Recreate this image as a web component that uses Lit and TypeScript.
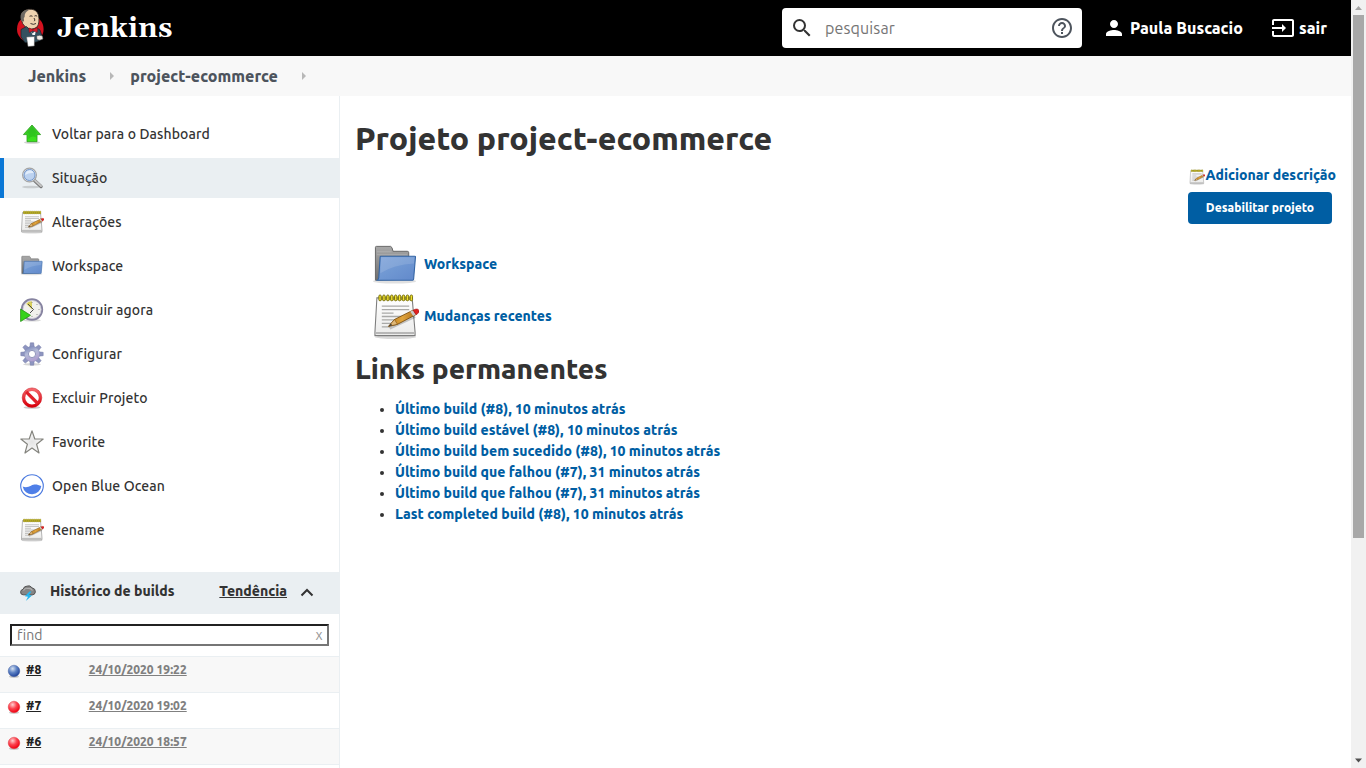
import { LitElement, html, css, svg } from "lit";
import { customElement } from "lit/decorators.js";

const notepad = (id: string) => svg`
  <defs>
    <linearGradient id="${id}p" x1="0" y1="0" x2="1" y2="0"><stop offset="0" stop-color="#b8791a"/><stop offset=".5" stop-color="#e0a43c"/><stop offset="1" stop-color="#b0701a"/></linearGradient>
    <linearGradient id="${id}b" x1="0" y1="0" x2="0" y2="1"><stop offset="0" stop-color="#ffffff"/><stop offset="1" stop-color="#ebebea"/></linearGradient>
  </defs>
  <ellipse cx="24" cy="45" rx="21" ry="2" fill="#000" opacity=".15"/>
  <path d="M5 5 H41 L44 40 V43.500 H3 V40 Z" fill="url(#${id}b)" stroke="#7d7d7d" stroke-width="1.100"/>
  <path d="M4 40.800 H43" stroke="#a5a5a5" stroke-width="1.500"/>
  <path d="M10 13.500H38 M10 17H38 M10 20.500H22 M10 24H35 M10 27.500H30 M10 31H20 M10 34.500H18" stroke="#a9a9a7" stroke-width="1.300"/>
  <path d="M7 5.500 H41" stroke="#a9a23c" stroke-width="4"/>
  ${[8, 12, 16, 20, 24, 28, 32, 36, 40].map((x) => svg`<rect x="${x - 1}" y="2" width="2.400" height="6" rx="1.200" fill="#f0e12a" stroke="#6f6810" stroke-width=".9"/>`)}
  <path d="M18 36 L44 24" stroke="#000" stroke-width="3" opacity=".2"/>
  <path d="M17 34 L23 27 L42 17.500 L45 22 L26 32 Z" fill="url(#${id}p)" stroke="#7a4c0c" stroke-width=".9"/>
  <path d="M17 34 L23 27 L26 32 Z" fill="#e0b878" stroke="#7a4c0c" stroke-width=".6"/>
  <path d="M17 34 L19.300 31.300 L20.600 33 Z" fill="#333"/>
  <path d="M39 19 L42 17.500 L45 22 L42 23.600 Z" fill="#c8c8c8"/>
  <path d="M42 17.500 Q47 15 48 18 Q48.500 20.500 45 22.300 Z" fill="#e02020" stroke="#a01010" stroke-width=".6"/>`;

const folder = (id: string) => svg`
  <defs>
    <linearGradient id="${id}f" x1="0" y1="0" x2="1" y2="1"><stop offset="0" stop-color="#7fa3d9"/><stop offset=".5" stop-color="#6f97d2"/><stop offset="1" stop-color="#6289cb"/></linearGradient>
    <linearGradient id="${id}g" x1="0" y1="0" x2="0" y2="1"><stop offset="0" stop-color="#a8a8a8"/><stop offset="1" stop-color="#6e6e6e"/></linearGradient>
  </defs>
  <ellipse cx="23" cy="42" rx="22" ry="2.500" fill="#000" opacity=".12"/>
  <path d="M3.500 41 V7.500 Q3.500 6.500 4.500 6.500 H19 Q20.500 6.500 21.500 11.500 H36 Q37.500 11.500 37.500 13 V40 Z" fill="url(#${id}g)" stroke="#666" stroke-width="1"/>
  <path d="M5 12 H20 M5 15 H36" stroke="#bdbdbd" stroke-width=".8" opacity=".7"/>
  <path d="M9 16.500 H43.500 Q44.500 16.500 44.400 17.500 L42.500 40 Q42.400 41 41.500 41 H5.500 Q6.700 40 6.900 38.500 L8.300 17.500 Q8.400 16.500 9 16.500 Z" fill="url(#${id}f)" stroke="#3465a4" stroke-width="1.100"/>
  <path d="M8.500 34 Q22 25 43 24 L43.400 17.500 H9.300 Z" fill="#fff" opacity=".13"/>`;

const gearTeeth = () =>
  [0, 45, 90, 135, 180, 225, 270, 315].map(
    (a) => svg`<path d="M9.800 5.500 L10.300 .800 H13.700 L14.200 5.500 Z" transform="rotate(${a} 12 12)"/>`
  );

const icons: Record<string, unknown> = {
  up: svg`<defs><linearGradient id="up" x1="0" y1="0" x2="0" y2="1"><stop offset="0" stop-color="#3fc92e"/><stop offset="1" stop-color="#3be41c"/></linearGradient></defs>
    <ellipse cx="12" cy="20.500" rx="8" ry="1.300" fill="#000" opacity=".18"/>
    <path d="M12 3 L20.600 12.600 H17 V19.700 H7 V12.600 H3.400 Z" fill="url(#up)" stroke="#2a9c1c" stroke-width=".8" stroke-linejoin="round"/>
    <path d="M12 4.600 L18 11.600 H15.800 V15.200 Q11 13.200 8.400 17.200 V11.600 H5.700 Z" fill="#0f9a10" opacity=".3"/>`,
  search: svg`<ellipse cx="11" cy="21" rx="9" ry="1.300" fill="#000" opacity=".14"/>
    <path d="M14.500 14.500 L21 20.500" stroke="#777" stroke-width="3.400" stroke-linecap="round"/>
    <path d="M15 14.500 L21 20" stroke="#c4c4c4" stroke-width="2" stroke-linecap="round"/>
    <circle cx="9.500" cy="9" r="6.900" fill="#dfe8f4" stroke="#a4a4a4" stroke-width="1.200"/>
    <circle cx="9.500" cy="9" r="5.500" fill="#bcd2f0" stroke="#6b90c6" stroke-width=".9"/>
    <path d="M5 9 Q6 4.500 10 4.200 Q13 4.300 13.500 7 Q9 6.500 5 9Z" fill="#e2edfb"/>`,
  clock: svg`<ellipse cx="12" cy="22.300" rx="9" ry="1.200" fill="#000" opacity=".15"/>
    <circle cx="12" cy="11.500" r="10.200" fill="#f1f1ec" stroke="#8683a0" stroke-width="1.900"/>
    <circle cx="12" cy="11.500" r="9" fill="none" stroke="#c9c7d6" stroke-width=".8"/>
    <path d="M12 11.500 L6.200 5.700 A8.200 8.200 0 0 1 12 3.300 Z" fill="#d9d05a"/>
    <path d="M8 6 L13.500 11.500 L10 15" fill="none" stroke="#4b4b4b" stroke-width="1"/>
    <g fill="#8b8b8b"><circle cx="12" cy="4.500" r=".6"/><circle cx="19" cy="11.500" r=".6"/><circle cx="17" cy="6.500" r=".6"/><circle cx="17" cy="16.500" r=".6"/><circle cx="12" cy="18.500" r=".6"/></g>
    <path d="M.600 11 L10.500 17.300 L.600 23.500 Z" fill="#35d21c" stroke="#239312" stroke-width=".8"/>`,
  gear: svg`<defs><linearGradient id="ge" x1="0" y1="0" x2=".4" y2="1"><stop offset="0" stop-color="#6b79b0"/><stop offset=".5" stop-color="#b4bbd8"/><stop offset="1" stop-color="#b0a0d0"/></linearGradient></defs>
    <ellipse cx="12" cy="22.300" rx="9" ry="1.300" fill="#000" opacity=".16"/>
    <g fill="#8e95c0" stroke="#737aa6" stroke-width=".5">${gearTeeth()}</g>
    <circle cx="12" cy="12" r="7.700" fill="url(#ge)" stroke="#868cb5" stroke-width=".4"/>
    <circle cx="12" cy="12" r="3.600" fill="#fff" stroke="#8a8fb5" stroke-width=".9"/>`,
  stop: svg`<defs><linearGradient id="st" x1="0" y1="0" x2="0" y2="1"><stop offset="0" stop-color="#f4656a"/><stop offset="1" stop-color="#d9000c"/></linearGradient></defs>
    <ellipse cx="12" cy="21.500" rx="8.500" ry="1.300" fill="#000" opacity=".2"/>
    <circle cx="12" cy="11.700" r="8.300" fill="#fff" stroke="url(#st)" stroke-width="3"/>
    <path d="M6.200 5.900 L17.800 17.500" stroke="#e0202a" stroke-width="3.200"/>
    <circle cx="12" cy="11.700" r="9.800" fill="none" stroke="#c90a14" stroke-width=".5"/>`,
  star: svg`<defs><radialGradient id="sr"><stop offset="0" stop-color="#e4e4e4"/><stop offset="1" stop-color="#fafafa"/></radialGradient></defs>
    <path d="M12 .900 L14.800 9 H23.200 L16.600 14.200 L19 23 L12 18 L5 23 L7.400 14.200 L.800 9 H9.200 Z" fill="url(#sr)" stroke="#84847e" stroke-width="1.200" stroke-linejoin="round"/>`,
  ocean: svg`<circle cx="12" cy="12" r="11.300" fill="#fff" stroke="#4a79df" stroke-width="1.100"/>
    <path d="M2.700 12.500 C6 14 8.500 12.800 11 11.700 C15 9.700 17.500 10.800 21.300 12 A9.400 9.400 0 0 1 2.700 12.500 Z" fill="#4f7fe8"/>`,
};

const glyph = (kind: string, id: string) =>
  kind === "notepad"
    ? html`<svg class="icon" viewBox="0 0 48 48">${notepad(id)}</svg>`
    : kind === "folder"
      ? html`<svg class="icon" viewBox="0 2 48 48">${folder(id)}</svg>`
      : html`<svg class="icon" viewBox="0 0 24 24">${icons[kind]}</svg>`;

const tasks: [string, string][] = [
  ["up", "Voltar para o Dashboard"],
  ["search", "Situação"],
  ["notepad", "Alterações"],
  ["folder", "Workspace"],
  ["clock", "Construir agora"],
  ["gear", "Configurar"],
  ["stop", "Excluir Projeto"],
  ["star", "Favorite"],
  ["ocean", "Open Blue Ocean"],
  ["notepad", "Rename"],
];

const permalinks = [
  "Último build (#8), 10 minutos atrás",
  "Último build estável (#8), 10 minutos atrás",
  "Último build bem sucedido (#8), 10 minutos atrás",
  "Último build que falhou (#7), 31 minutos atrás",
  "Último build que falhou (#7), 31 minutos atrás",
  "Last completed build (#8), 10 minutos atrás",
];

const builds: [string, string, string][] = [
  ["#8", "24/10/2020 19:22", "blue"],
  ["#7", "24/10/2020 19:02", "red"],
  ["#6", "24/10/2020 18:57", "red"],
];

@customElement("app-root")
export class AppRoot extends LitElement {
  static styles = css`
    :host { display: flex; width: 1366px; height: 768px; overflow: hidden; background: #fff; color: #333;
      font-family: Ubuntu, "Noto Sans", "Open Sans", sans-serif; font-size: 14px; white-space: nowrap; }
    * { box-sizing: border-box; }
    svg { display: block; flex: none; }
    .page { width: 1351px; display: flex; flex-direction: column; }
    .header { height: 56px; flex: none; background: #000; display: flex; align-items: center; color: #fff; font-size: 16px; }
    .butler { margin-left: 16px; }
    .brand { margin-left: 12px; width: 117px; font: bold 28px/32px Georgia, Gelasio, "DejaVu Serif", serif; letter-spacing: .35px; padding-top: 1px; }
    .search { margin-left: auto; width: 300px; height: 40px; border-radius: 4px; background: #fff; color: #757575; display: flex; align-items: center; padding: 0 8px; }
    .search span { margin-left: 11px; flex: 1; letter-spacing: .14px; }
    .user { display: flex; align-items: center; margin-left: 20px; width: 169px; font-weight: 800; }
    .user span { margin-left: 4px; }
    .logout { display: flex; align-items: center; width: 80px; font-weight: 800; }
    .logout span { margin-left: 4px; }
    .crumbs { height: 40px; flex: none; background: #f8f8f8; display: flex; align-items: center; padding-left: 28px; color: #4d545d; font-weight: 800; font-size: 16px; }
    .tri { width: 0; height: 0; border: 4px solid transparent; border-left-color: #b8b8b8; border-right: 0; }
    .crumbs .first { margin: 0 16px 0 24px; }
    .crumbs .last { margin-left: 24px; }
    .body { flex: 1; display: flex; min-height: 0; }
    .side { width: 340px; border-right: 1px solid #eaeff2; padding-top: 18px; overflow: hidden; }
    .task { height: 40px; margin-bottom: 4px; display: flex; align-items: center; gap: 8px; padding-left: 16px; border-left: 4px solid transparent; font-weight: 500; letter-spacing: .105px; }
    .task.on { background: #eaeff2; border-left-color: #0a77d6; }
    .icon { width: 24px; height: 24px; }
    .hist { height: 42px; margin-top: 22px; background: #eaeff2; display: flex; align-items: center; padding: 0 24px 4px 20px; font-weight: 800; }
    .hist .t { margin-left: 14px; flex: 1; }
    .hist svg.cloud { margin-top: 3px; }
    .hist svg.chev { margin: 4px 0 0 12px; }
    .find { margin: 10px; height: 22px; border: 2px inset #767676; display: flex; justify-content: space-between; align-items: center; padding: 0 4.500px 0 5px; color: #757575; line-height: 16px; letter-spacing: .02px; }
    .find .x { color: #999; }
    .build { height: 36px; border-top: 1px solid #eaeff2; display: flex; padding: 4px 0 0 7px; font-weight: 800; font-size: 12px; line-height: 18px; }
    .build:nth-child(odd) { background: #f8f8f8; }
    .build.rest { background: #fff; }
    .build svg { margin: 3px 5px 0 0; }
    .build .no { width: 62.700px; color: #222; }
    .build .date { color: #808080; letter-spacing: .03px; }
    .main { flex: 1; padding: 0 15px; }
    h1, h2 { margin: 0; font-weight: 800; }
    h1 { font-size: 32px; line-height: 40px; padding-top: 22px; }
    .tools { display: flex; flex-direction: column; align-items: flex-end; }
    .link { color: #005ea3; font-weight: 800; text-decoration: none; }
    .desc { display: flex; align-items: center; height: 20px; margin-top: 7px; }
    .desc svg { width: 16px; height: 16px; margin-top: 3px; }
    .btn { margin: 7px 4px 0 0; width: 144px; height: 32px; border-radius: 4px; background: #005ea3; color: #fff; font-weight: 800; font-size: 12px; display: flex; align-items: center; justify-content: center; padding-bottom: 1px; }
    .entry { display: flex; align-items: center; gap: 5px; height: 52px; padding-left: 17px; }
    .entry svg { width: 47px; height: 47px; }
    .entries { margin-top: 14px; }
    h2 { font-size: 28px; line-height: 36px; margin-top: 9px; }
    ul { margin: 12px 0 0; padding-left: 40px; line-height: 21px; }
    .scroll { width: 15px; background: #f1f1f1; display: flex; flex-direction: column; align-items: center; }
    .scroll i { width: 11px; height: 523px; background: #a8a8a8; margin-bottom: auto; }
    .scroll svg { height: 15px; }
  `;

  render() {
    return html`
      <div class="page">
        <div class="header">
          <svg class="butler" width="29" height="40" viewBox="0 0 29 40">
            <ellipse cx="14.300" cy="21" rx="13.300" ry="13.500" fill="#d5121f"/>
            <path d="M5.500 12 Q3.500 3 12 1.300 Q20.500 .300 22.500 7 Q24 15 21 19 Q15.500 23 9.500 19 Q6 16 5.500 12Z" fill="#eed2b0" stroke="#2b2320" stroke-width=".8"/>
            <path d="M5.300 13 Q3 6 7.500 3 Q10.500 1.400 14.500 1.300 Q10 3 8.800 6.500 Q9 9 7.800 10 L8.100 13.500 Z" fill="#6d6862"/>
            <path d="M13.500 8.300 q1.500 -1 3 0 M18.500 8 q1.500 -.800 2.700 .200 M18 10 q1.800 2.500 .200 3.200 M14.500 15.500 q3 1.700 5.500 0" stroke="#2b2320" stroke-width=".9" fill="none"/>
            <path d="M5 21.500 L10.500 18.500 L15 23 L21 20 L24 22 L27 31 L20 34 L9 34.500 L5 29 Z" fill="#34505f" stroke="#1b262d" stroke-width=".7"/>
            <path d="M15 23 L16.500 25.500 L20 22 L19 27 L16.500 27 Z" fill="#f4f4f4"/>
            <path d="M12.800 19.800 L16.500 21.700 L21.500 19.500 L21.300 24.300 L16.800 22.800 L13.200 24.500 Z" fill="#d81a28" stroke="#7a0b12" stroke-width=".4"/>
            <path d="M10.500 29 L18.500 28.500 L18.300 38 L12 38.500 Z" fill="#fff" stroke="#555" stroke-width=".5"/>
            <path d="M20.500 28 q3 -1.500 6 0 l.500 3 q-3 2 -6 .500 Z" fill="#f1ebe4" stroke="#333" stroke-width=".5"/>
          </svg>
          <span class="brand">Jenkins</span>
          <div class="search">
            <svg width="24" height="24" viewBox="0 0 24 24"><path fill="#333" d="M15.500 14h-.790l-.280-.270A6.471 6.471 0 0 0 16 9.500 6.500 6.500 0 1 0 9.500 16c1.610 0 3.090-.590 4.230-1.570l.270.280v.790l5 4.990L20.490 19l-4.990-5zm-6 0C7.010 14 5 11.990 5 9.500S7.010 5 9.500 5 14 7.010 14 9.500 11.990 14 9.500 14z"/></svg>
            <span>pesquisar</span>
            <svg width="24" height="24" viewBox="0 0 24 24"><path fill="#4d545d" d="M11 18h2v-2h-2v2zm1-16C6.480 2 2 6.480 2 12s4.480 10 10 10 10-4.480 10-10S17.520 2 12 2zm0 18c-4.410 0-8-3.590-8-8s3.590-8 8-8 8 3.590 8 8-3.590 8-8 8zm0-14c-2.210 0-4 1.790-4 4h2c0-1.100.900-2 2-2s2 .900 2 2c0 2-3 1.750-3 5h2c0-2.250 3-2.500 3-5 0-2.210-1.790-4-4-4z"/></svg>
          </div>
          <div class="user">
            <svg width="24" height="24" viewBox="0 0 24 24"><path fill="#fff" d="M12 12c2.210 0 4-1.790 4-4s-1.790-4-4-4-4 1.790-4 4 1.790 4 4 4zm0 2c-2.670 0-8 1.340-8 4v2h16v-2c0-2.660-5.330-4-8-4z"/></svg>
            <span>Paula Buscacio</span>
          </div>
          <div class="logout">
            <svg width="24" height="24" viewBox="0 0 24 24"><path fill="#fff" d="M21 3.010H3c-1.100 0-2 .900-2 2V9h2V4.990h18v14.030H3V15H1v4.010c0 1.100.900 1.980 2 1.980h18c1.100 0 2-.880 2-1.980v-14c0-1.110-.900-2-2-2zM11 16l4-4-4-4v3H1v2h10v3z"/></svg>
            <span>sair</span>
          </div>
        </div>
        <div class="crumbs">
          <span>Jenkins</span><i class="tri first"></i>
          <span>project-ecommerce</span><i class="tri last"></i>
        </div>
        <div class="body">
          <div class="side">
            ${tasks.map(([icon, label], i) => html`<div class="task ${i === 1 ? "on" : ""}">${glyph(icon, "t" + i)}<span>${label}</span></div>`)}
            <div class="hist">
              <svg class="cloud" width="16" height="16" viewBox="0 0 16 16">
                <path d="M3 9.800 Q.300 9.500 .600 6.800 Q1 4.500 3 4.300 Q4 1 7.500 1 Q10 0 12 2.800 Q15.600 3.500 15.400 7 Q15 9.800 12 10 Z" fill="#858585" stroke="#4d4d4d" stroke-width=".9"/>
                <path d="M3.500 5.500 Q5 2.500 8 3.500 Q11 3 12.500 5.500" fill="none" stroke="#b0b0b0" stroke-width="1.200"/>
                <path d="M9.500 6.500 L4.800 11.300 L8 11.800 L5.800 16 L12 10.600 L9.200 10 L11.500 6.500 Z" fill="#27b6ee"/>
              </svg>
              <span class="t">Histórico de builds</span>
              <u>Tendência</u>
              <svg class="chev" width="16" height="16" viewBox="0 0 16 16"><path d="M2.500 10.500 L8 5 L13.500 10.500" fill="none" stroke="#333" stroke-width="2"/></svg>
            </div>
            <div class="find"><span>find</span><span class="x">x</span></div>
            <div>
              ${builds.map(([no, date, color]) => html`
                <div class="build">
                  <svg width="14" height="14" viewBox="0 0 14 14">
                    <defs><radialGradient id="ball${no.slice(1)}" cx=".38" cy=".3" r=".7">
                      <stop offset="0" stop-color="${color === "blue" ? "#d5e0f0" : "#ffd0d0"}"/>
                      <stop offset=".5" stop-color="${color === "blue" ? "#5d82c4" : "#fb4450"}"/>
                      <stop offset="1" stop-color="${color === "blue" ? "#20439a" : "#f00010"}"/>
                    </radialGradient></defs>
                    <ellipse cx="7" cy="12.500" rx="5" ry="1.300" fill="#000" opacity=".2"/>
                    <circle cx="7" cy="7" r="5.800" fill="url(#ball${no.slice(1)})" stroke="${color === "blue" ? "#3a5799" : "#d83038"}" stroke-width=".4"/>
                  </svg>
                  <span class="no"><u>${no}</u></span>
                  <span class="date"><u>${date}</u></span>
                </div>`)}
              <div class="build rest"></div>
            </div>
          </div>
          <div class="main">
            <h1>Projeto project-ecommerce</h1>
            <div class="tools">
              <div class="desc"><svg viewBox="0 0 48 48">${notepad("d")}</svg><a class="link">Adicionar descrição</a></div>
              <div class="btn">Desabilitar projeto</div>
            </div>
            <div class="entries">
              <div class="entry"><svg viewBox="0 1 48 48">${folder("ew")}</svg><a class="link">Workspace</a></div>
              <div class="entry"><svg viewBox="0 0 48 48">${notepad("en")}</svg><a class="link">Mudanças recentes</a></div>
            </div>
            <h2>Links permanentes</h2>
            <ul>${permalinks.map((t) => html`<li><a class="link">${t}</a></li>`)}</ul>
          </div>
        </div>
      </div>
      <div class="scroll">
        <svg width="15" height="15" viewBox="0 0 15 15"><path d="M4 10 L7.500 6 L11 10Z" fill="#a3a3a3"/></svg>
        <i></i>
        <svg width="15" height="15" viewBox="0 0 15 15"><path d="M4 5.500 L7.500 9.500 L11 5.500Z" fill="#505050"/></svg>
      </div>
    `;
  }
}
